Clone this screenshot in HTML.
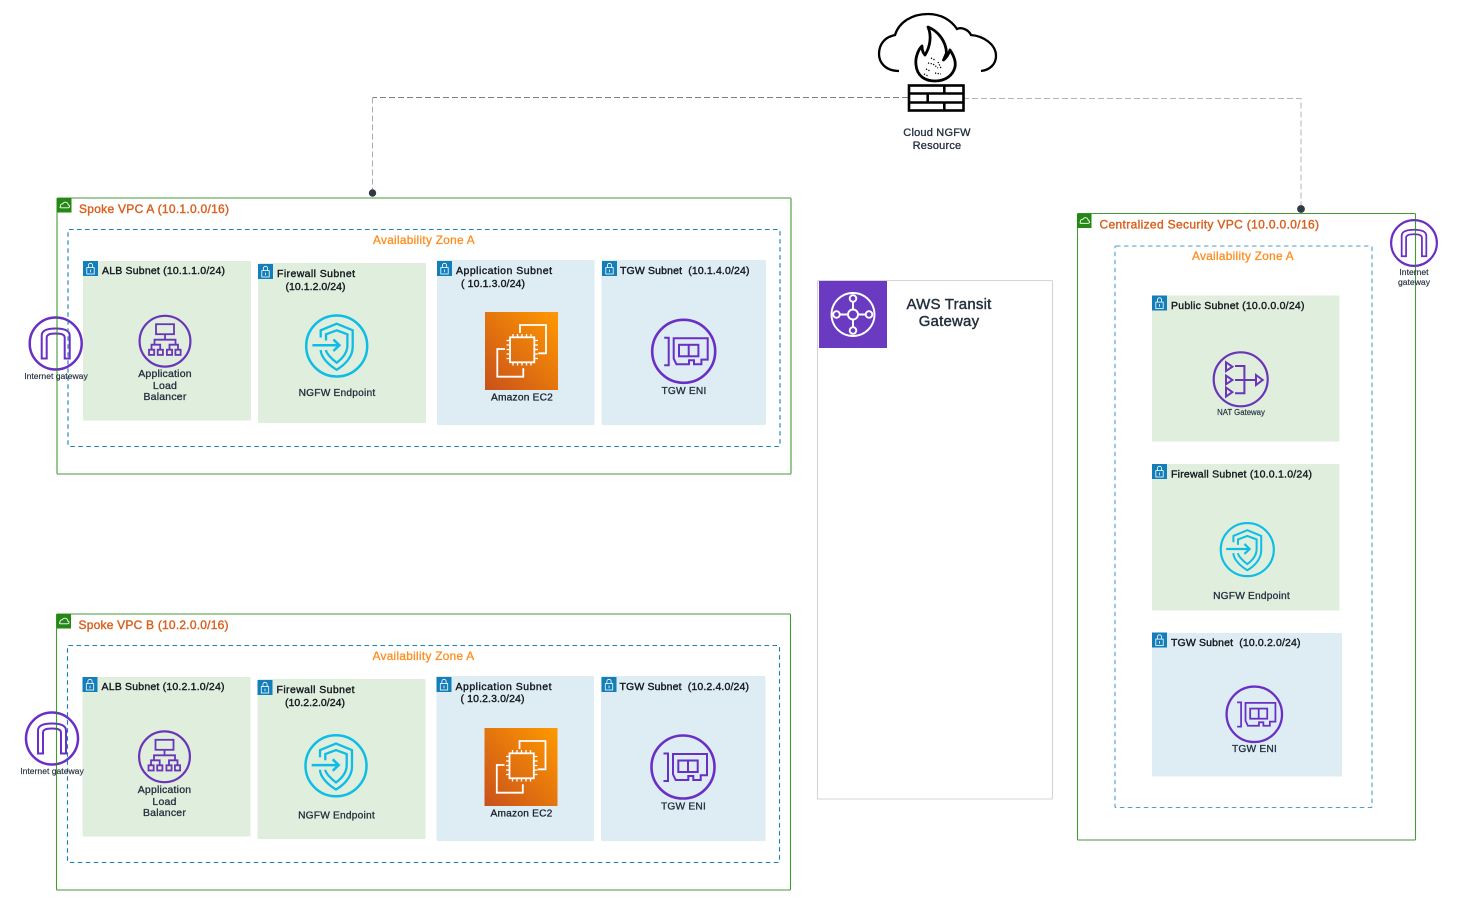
<!DOCTYPE html>
<html><head><meta charset="utf-8"><title>AWS Cloud NGFW Architecture</title>
<style>
html,body{margin:0;padding:0;background:#fff;width:1462px;height:910px;overflow:hidden}
svg{display:block;position:absolute;left:0;top:0;filter:blur(.3px)}
text{font-family:"Liberation Sans",sans-serif;white-space:pre}
.sub{font-size:10.5px;fill:#16191f;stroke:#16191f;stroke-width:.38}
.lab{font-size:10.2px;fill:#232f3e;stroke:#232f3e;stroke-width:.3;text-anchor:middle;letter-spacing:.2px}
.vpc{font-size:12px;fill:#d9601f;stroke:#d9601f;stroke-width:.4}
.az{font-size:11.8px;fill:#ff8c1f;stroke:#ff8c1f;stroke-width:.3;text-anchor:middle;letter-spacing:.3px}
.igw{font-size:8.6px;fill:#232f3e;stroke:#232f3e;stroke-width:.15;text-anchor:middle}
</style></head><body>
<svg width="1462" height="910" viewBox="0 0 1462 910" xmlns="http://www.w3.org/2000/svg">
<defs>
<linearGradient id="ec2" x1="0" y1="1" x2="1" y2="0"><stop offset="0" stop-color="#c8511b"/><stop offset="1" stop-color="#ff9900"/></linearGradient>
<g id="lock"><rect width="15" height="15" fill="#147eba"/><g fill="none" stroke="#fff" stroke-width=".8"><rect x="3.8" y="6.6" width="7.4" height="6.4"/><path d="M5.4 6.6V4.4a2.1 2.1 0 0 1 4.2 0V6.6"/><path d="M7.5 8.6v2.6"/></g></g>
<g id="vtag"><rect width="14.5" height="14.5" fill="#248814"/><path d="M3.6 9.8h7.6c1.8-.2 1.8-2.6 0-2.9-.3-3.2-4.400-3.600-5.300-1-1.700-.3-2.800 1-2.300 2.400-.9.4-.8 1.300 0 1.500z" fill="none" stroke="#fff" stroke-width=".9"/></g>
<g id="igw" fill="none" stroke="#6a2fc4"><circle r="26" stroke-width="2.500"/><path d="M-14 15V-8C-14-13-9-15 0-15S14-13 14-8V15H9V-6C9-9 6-10 0-10S-9-9-9-6V15Z" stroke-width="2"/></g>
<g id="alb" fill="none" stroke="#6a35b8" stroke-width="1.800"><circle r="25.400" stroke-width="2.200"/><rect x="-9" y="-17" width="18" height="10"/><path d="M0-7V-1.500M-10.500 3.500V-1.500H10.500V3.500M-13.500 8.500V3.500H-4.800V8.500M4.500 8.500V3.500H13V8.500"/><rect x="-16" y="8.500" width="5.200" height="5.200"/><rect x="-7.300" y="8.500" width="5.200" height="5.200"/><rect x="1.900" y="8.500" width="5.200" height="5.200"/><rect x="10.400" y="8.500" width="5.200" height="5.200"/></g>
<g id="shield" fill="none" stroke="#0ebde6" stroke-width="2.300" stroke-linejoin="miter"><circle r="30.500" stroke-width="2.500"/><path d="M-16-8.500V-15.700L0-22.300 16-15.700V1C16 11 8 19 0 23.700-8 19-16 11-16 4"/><path d="M-10.700-5.500V-11.700L0-15.700 10.700-11.700V-.7C10.700 7 5 13 0 16.700-5 13-10.700 7-10.700 4"/><path d="M-24.300-.7H2.500M-3.300-6.500 2.700-.7-3.300 5" stroke-width="2.500"/></g>
<g id="eni" fill="none" stroke="#6a2fc4" stroke-width="2" stroke-linejoin="miter"><circle r="31.500" stroke-width="2.600"/><path d="M-19.500-13.500H-15V14H-19.500"/><path d="M-10-13H24V8.300H17.700V13H10.300V9H5.300V13H-7.300L-10 7.300Z"/><rect x="-4.700" y="-6.500" width="19.400" height="11.500"/><path d="M5-6.500V5"/></g>
<g id="ec2i"><rect width="73" height="78" fill="url(#ec2)"/><g fill="none" stroke="#fff" stroke-width="1.800"><rect x="25" y="25.300" width="24.300" height="25"/><path d="M35 21V13H61V41.300H53.300M20 37H12.300V64.700H38.300V56.300"/><path d="M28 22V25M32.500 22V25M37 22V25M41.500 22V25M46 22V25M28 50V53.500M32.500 50V53.500M37 50V53.500M41.500 50V53.500M46 50V53.500M21.500 28.500H25M21.500 33H25M21.500 37.500H25M21.500 42H25M21.500 46.500H25M49 28.500H53M49 33H53M49 37.500H53M49 42H53M49 46.500H53" stroke-width="1.300"/></g></g>
</defs>

<!-- connectors -->
<path d="M908 97.500H372.500" fill="none" stroke="#7d8187" stroke-width="1" stroke-dasharray="6 3"/>
<path d="M372.500 97.500V191" fill="none" stroke="#a8abb0" stroke-width="1" stroke-dasharray="6 3"/>
<path d="M963 98.500H1301V207" fill="none" stroke="#b4b6ba" stroke-width="1" stroke-dasharray="6 3"/>
<circle cx="372.500" cy="193" r="3.700" fill="#333a45"/>
<circle cx="1301" cy="209" r="3.900" fill="#333a45"/>

<!-- cloud NGFW -->
<path d="M899 71C886 71 879 63 879 54C879 44 885 37 895 35C899 22 912 14 928 14C941 14 951 20 957 29C961 27 968 29 971 35C983 36 996 44 996 56C996 64 990 70 981 71" fill="none" stroke="#000" stroke-width="2.300"/>
<path d="M928 27C938 31 946 41 946.500 53L943.500 60C947 57 949 53 950 50C954 56 956 62 955 67C953 75 946 81 935 81C925 81 917 76 916 65C915 58 918 50 922 46C922 50 923 53 925 55C930 47 932 36 928 27Z" fill="none" stroke="#000" stroke-width="2.800" stroke-linejoin="round"/>
<path d="M931 58L935 60M928 63L933 64L938 68M926 69L930 71M935 73L941 74M924 74L928 76M938 62L941 68" fill="none" stroke="#000" stroke-width="1.300" stroke-dasharray="1.200 1.500"/>
<g fill="none" stroke="#000" stroke-width="2.600"><rect x="909" y="85.500" width="54.500" height="25"/><path d="M909 93.500H963.500M909 102.500H963.500M944.300 85.500V93.500M927.700 93.500V102.500M944.300 102.500V110.500"/></g>
<text class="lab" x="937" y="136" style="font-size:11px">Cloud NGFW</text>
<text class="lab" x="937" y="149" style="font-size:11px">Resource</text>

<!-- Spoke VPC A -->
<use href="#igw" x="55.700" y="343.500"/>
<rect x="83" y="261" width="168" height="159.500" rx="1" fill="#e0eedd"/>
<rect x="258" y="263" width="168" height="160" rx="1" fill="#e0eedd"/>
<rect x="437" y="260" width="157.500" height="165" rx="1" fill="#deecf4"/>
<rect x="601.500" y="260" width="164.500" height="165" rx="1" fill="#deecf4"/>
<rect x="57" y="198" width="734" height="276" rx="1" fill="none" stroke="#248814" stroke-width="1.100" opacity=".85"/>
<rect x="68" y="229.500" width="712" height="217" rx="1" fill="none" stroke="#147eba" stroke-width="1.100" stroke-dasharray="4.500 3.500"/>
<use href="#vtag" x="57" y="198"/>
<text class="vpc" x="79" y="213" textLength="150">Spoke VPC A (10.1.0.0/16)</text>
<text class="az" x="424" y="244">Availability Zone A</text>
<use href="#lock" x="83" y="261"/><use href="#lock" x="258" y="264"/><use href="#lock" x="437" y="261"/><use href="#lock" x="602" y="261"/>
<text class="sub" x="102" y="274" textLength="123">ALB Subnet (10.1.1.0/24)</text>
<text class="sub" x="277" y="277" textLength="78">Firewall Subnet</text>
<text class="sub" x="285.500" y="290" textLength="60">(10.1.2.0/24)</text>
<text class="sub" x="456" y="274" textLength="96">Application Subnet</text>
<text class="sub" x="461" y="287" textLength="64">( 10.1.3.0/24)</text>
<text class="sub" x="620" y="274" textLength="129.500">TGW Subnet  (10.1.4.0/24)</text>
<use href="#alb" x="165" y="341.200"/>
<use href="#shield" x="336.700" y="346"/>
<use href="#ec2i" x="485" y="312"/>
<use href="#eni" x="683.700" y="351.300"/>
<text class="lab" x="165" y="377" style="font-size:10.500px">Application</text><text class="lab" x="165" y="389" style="font-size:10.500px">Load</text><text class="lab" x="165" y="400" style="font-size:10.500px">Balancer</text>
<text class="lab" x="337" y="396">NGFW Endpoint</text>
<text class="lab" x="522" y="400.500" style="fill:#16191f">Amazon EC2</text>
<text class="lab" x="684" y="394">TGW ENI</text>
<text class="igw" x="56" y="379">Internet gateway</text>

<!-- Spoke VPC B -->
<use href="#igw" x="52" y="738.500"/>
<rect x="82.500" y="677" width="168" height="159.500" rx="1" fill="#e0eedd"/>
<rect x="257.500" y="679" width="168" height="160" rx="1" fill="#e0eedd"/>
<rect x="436.500" y="676" width="157.500" height="165" rx="1" fill="#deecf4"/>
<rect x="601" y="676" width="164.500" height="165" rx="1" fill="#deecf4"/>
<rect x="56.500" y="614" width="734" height="276" rx="1" fill="none" stroke="#248814" stroke-width="1.100" opacity=".85"/>
<rect x="67.500" y="645.500" width="712" height="217" rx="1" fill="none" stroke="#147eba" stroke-width="1.100" stroke-dasharray="4.500 3.500"/>
<use href="#vtag" x="56.500" y="614"/>
<text class="vpc" x="78.500" y="629" textLength="150">Spoke VPC B (10.2.0.0/16)</text>
<text class="az" x="423.500" y="660">Availability Zone A</text>
<use href="#lock" x="82.500" y="677"/><use href="#lock" x="257.500" y="680"/><use href="#lock" x="436.500" y="677"/><use href="#lock" x="601.500" y="677"/>
<text class="sub" x="101.500" y="690" textLength="123">ALB Subnet (10.2.1.0/24)</text>
<text class="sub" x="276.500" y="693" textLength="78">Firewall Subnet</text>
<text class="sub" x="285" y="706" textLength="60">(10.2.2.0/24)</text>
<text class="sub" x="455.500" y="690" textLength="96">Application Subnet</text>
<text class="sub" x="460.500" y="702" textLength="64">( 10.2.3.0/24)</text>
<text class="sub" x="619.500" y="690" textLength="129.500">TGW Subnet  (10.2.4.0/24)</text>
<use href="#alb" x="164.500" y="756.800"/>
<use href="#shield" x="336" y="765.800"/>
<use href="#ec2i" x="484.500" y="728"/>
<use href="#eni" x="683" y="767"/>
<text class="lab" x="164.500" y="793" style="font-size:10.500px">Application</text><text class="lab" x="164.500" y="805" style="font-size:10.500px">Load</text><text class="lab" x="164.500" y="816" style="font-size:10.500px">Balancer</text>
<text class="lab" x="336.500" y="818.500">NGFW Endpoint</text>
<text class="lab" x="521.500" y="816.500" style="fill:#16191f">Amazon EC2</text>
<text class="lab" x="683.500" y="809.500">TGW ENI</text>
<text class="igw" x="52" y="774">Internet gateway</text>

<!-- Transit Gateway -->
<rect x="817.500" y="280.500" width="235" height="518.500" rx="1" fill="#fff" stroke="#d4d4d4" stroke-width="1.100"/>
<rect x="819" y="281" width="68" height="67" fill="#6a3bc0"/>
<g fill="none" stroke="#fff" stroke-width="1.900"><circle cx="853" cy="314.500" r="21.500"/><circle cx="853" cy="314.500" r="5"/><circle cx="853" cy="298.500" r="3.300" fill="#6a3bc0"/><circle cx="853" cy="330.500" r="3.300" fill="#6a3bc0"/><circle cx="836.500" cy="314.500" r="3.300" fill="#6a3bc0"/><circle cx="869" cy="314.500" r="3.300" fill="#6a3bc0"/><path d="M840 314.500H848M858 314.500H866M853 302V309.500M853 319.500V327"/></g>
<text x="949" y="309" text-anchor="middle" style="font-size:15px;fill:#232f3e;stroke:#232f3e;stroke-width:.4;letter-spacing:.2px">AWS Transit</text>
<text x="949" y="326" text-anchor="middle" style="font-size:15px;fill:#232f3e;stroke:#232f3e;stroke-width:.4;letter-spacing:.2px">Gateway</text>

<!-- Centralized VPC -->
<rect x="1152" y="295.500" width="187.500" height="146" rx="1" fill="#e0eedd"/>
<rect x="1152" y="464" width="187.500" height="146.500" rx="1" fill="#e0eedd"/>
<rect x="1152" y="633" width="190" height="143.500" rx="1" fill="#deecf4"/>
<g transform="translate(1414 243) scale(.88)"><use href="#igw"/></g>
<rect x="1077.500" y="213.500" width="338" height="626.500" rx="1" fill="none" stroke="#248814" stroke-width="1.100" opacity=".85"/>
<rect x="1115" y="246" width="257" height="561.500" rx="1" fill="none" stroke="#147eba" stroke-width="1.100" stroke-dasharray="4.500 3.500" opacity=".75"/>
<use href="#vtag" x="1077" y="213.500"/>
<text class="vpc" x="1099.500" y="228.500" textLength="219.500">Centralized Security VPC (10.0.0.0/16)</text>
<text class="az" x="1243" y="260">Availability Zone A</text>
<text class="igw" x="1414" y="275">Internet</text><text class="igw" x="1414" y="285">gateway</text>
<use href="#lock" x="1152" y="295.500"/><use href="#lock" x="1152" y="464"/><use href="#lock" x="1152" y="632.500"/>
<text class="sub" x="1171" y="309" textLength="133.500">Public Subnet (10.0.0.0/24)</text>
<text class="sub" x="1171" y="477.500" textLength="141">Firewall Subnet (10.0.1.0/24)</text>
<text class="sub" x="1171" y="646" textLength="129.500">TGW Subnet  (10.0.2.0/24)</text>
<g fill="none" stroke="#6a35b8" stroke-width="2" transform="translate(1240.700 379.300)"><circle r="27" stroke-width="2.200"/><path d="M-14.700-17-8.300-12.600-14.700-8.300ZM-14.700-3.700-8.300 .7-14.700 5ZM-14.700 8.300-8.300 12.800-14.700 17.300Z"/><path d="M-5.700-13.300H3.700V14H-5.700M-5.700 .7H15.300"/><path d="M15.300-4.300 22 .7 15.300 5.700Z"/></g>
<text class="igw" x="1241" y="415" style="font-size:7.800px">NAT Gateway</text>
<g transform="translate(1247.300 549.600) scale(.87)"><use href="#shield"/></g>
<text class="lab" x="1251.500" y="599">NGFW Endpoint</text>
<g transform="translate(1254.300 714.300) scale(.88)"><use href="#eni"/></g>
<text class="lab" x="1254.500" y="752">TGW ENI</text>
</svg>
</body></html>
